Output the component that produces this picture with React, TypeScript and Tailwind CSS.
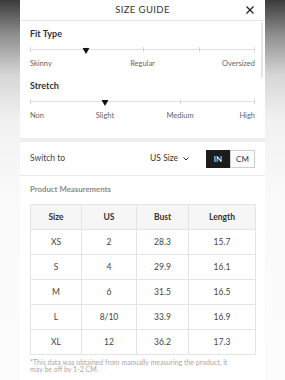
import React from "react";

function Tick({ left }: { left: string }) {
  return <div className="absolute top-[3px] h-[5px] w-px bg-[#d6d6d6]" style={{ left }} />;
}

function Marker({ left }: { left: string }) {
  return (
    <div className="absolute top-[4px] -translate-x-1/2" style={{ left }}>
      <svg width="7" height="6" viewBox="0 0 7 6">
        <path d="M0 0 L7 0 L3.5 6 Z" fill="#111" />
      </svg>
    </div>
  );
}

function Slider({ ticks, marker }: { ticks: string[]; marker: string }) {
  return (
    <div className="relative h-[10px]">
      <div className="absolute left-0 right-0 top-[5px] h-px bg-[#e0e0e0]" />
      {ticks.map((t) => (
        <Tick key={t} left={t} />
      ))}
      <Marker left={marker} />
    </div>
  );
}

const rows = [
  ["XS", "2", "28.3", "15.7"],
  ["S", "4", "29.9", "16.1"],
  ["M", "6", "31.5", "16.5"],
  ["L", "8/10", "33.9", "16.9"],
  ["XL", "12", "36.2", "17.3"],
];

export default function App() {
  return (
    <div className="w-[285px] h-[380px] overflow-hidden flex justify-center bg-[linear-gradient(to_bottom,#3b3b3b_0px,#8f8f8f_35px,#d6d6d6_75px,#f1f1f1_120px,#fafafa_200px,#fcfcfc_380px)] font-['Lato','Noto_Sans',sans-serif]">
      <div className="relative w-[245px] h-full bg-white flex flex-col">
        {/* scrollbar thumb */}
        <div className="absolute right-[2px] top-[22px] h-[56px] w-[2px] rounded bg-[#e6e6e6]" />
        {/* header */}
        <div className="grid grid-cols-[24px_1fr_24px] h-[21px] border-b border-[#e6e6e6] items-center">
          <div />
          <div className="text-center text-[9.5px] tracking-[0.4px] text-[#333] leading-none">SIZE GUIDE</div>
          <div className="flex justify-start pl-[5px]">
            <svg width="8" height="8" viewBox="0 0 8 8">
              <path d="M0.5 0.5 L7.5 7.5 M7.5 0.5 L0.5 7.5" stroke="#222" strokeWidth="1.3" />
            </svg>
          </div>
        </div>
        {/* fit section */}
        <div className="px-[10px]">
          <div className="mt-[7px] h-[12px] leading-[12px] text-[9px] font-bold text-[#333]">Fit Type</div>
          <div className="mt-[4px]">
            <Slider ticks={["0%", "25%", "50%", "75%", "calc(100% - 1px)"]} marker="25%" />
          </div>
          <div className="mt-[5px] grid grid-cols-3 h-[10px] leading-[10px] text-[7.5px] text-[#666]">
            <div className="text-left">Skinny</div>
            <div className="text-center">Regular</div>
            <div className="text-right">Oversized</div>
          </div>
          <div className="mt-[11px] h-[12px] leading-[12px] text-[9px] font-bold text-[#333]">Stretch</div>
          <div className="mt-[4px]">
            <Slider ticks={["0%", "66.67%", "calc(100% - 1px)"]} marker="33.33%" />
          </div>
          <div className="mt-[5px] grid grid-cols-6 h-[10px] leading-[10px] text-[7.5px] text-[#666]">
            <div className="text-left">Non</div>
            <div className="col-span-2 text-center">Slight</div>
            <div className="col-span-2 text-center">Medium</div>
            <div className="text-right">High</div>
          </div>
        </div>
        <div className="mt-[17px] h-[4px] bg-[#eeeeee]" />
        {/* switch row */}
        <div className="h-[34px] border-b border-[#ececec] px-[10px] flex items-center">
          <div className="flex-1 text-[8.5px] text-[#444]">Switch to</div>
          <div className="flex items-center gap-[5px] text-[8.5px] text-[#333] mr-[17px]">
            <span>US Size</span>
            <svg width="6" height="4" viewBox="0 0 6 4">
              <path d="M0.5 0.5 L3 3 L5.5 0.5" fill="none" stroke="#333" strokeWidth="1" />
            </svg>
          </div>
          <div className="flex h-[18px] text-[8px]">
            <div className="w-[24px] bg-[#1c1c1c] text-white flex items-center justify-center">IN</div>
            <div className="w-[25px] border border-[#cfcfcf] text-[#333] flex items-center justify-center">CM</div>
          </div>
        </div>
        {/* measurements */}
        <div className="px-[10px]">
          <div className="mt-[7px] h-[12px] leading-[12px] text-[7.8px] font-bold text-[#8a8a8a]">Product Measurements</div>
          <table className="mt-[9px] w-[225px] border-collapse table-fixed text-[8.5px] text-[#444]">
            <colgroup>
              <col className="w-[51px]" />
              <col className="w-[55px]" />
              <col className="w-[52px]" />
              <col className="w-[67px]" />
            </colgroup>
            <thead>
              <tr className="h-[25px] bg-[#f6f6f6]">
                {["Size", "US", "Bust", "Length"].map((h) => (
                  <th key={h} className="border border-[#e4e4e4] font-bold text-[#333] text-center p-0">
                    {h}
                  </th>
                ))}
              </tr>
            </thead>
            <tbody>
              {rows.map((r) => (
                <tr key={r[0]} className="h-[25px]">
                  {r.map((c, i) => (
                    <td key={i} className="border border-[#e4e4e4] text-center p-0">
                      {c}
                    </td>
                  ))}
                </tr>
              ))}
            </tbody>
          </table>
          <div className="mt-[4px] text-[7px] leading-[7px] text-[#a8a8a8]">
            *This data was obtained from manually measuring the product, it
            <br />
            may be off by 1-2 CM.
          </div>
        </div>
      </div>
    </div>
  );
}
